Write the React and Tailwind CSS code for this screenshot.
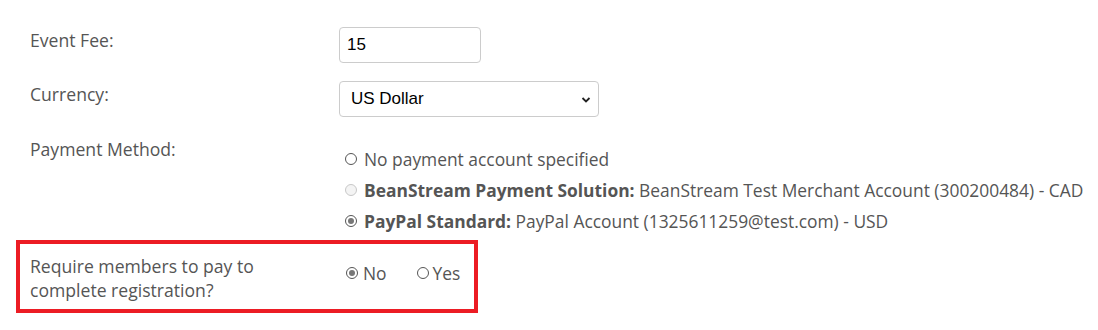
import React, { useState } from "react";

const Radio = ({ checked, disabled }) => (
    <span
        className={`inline-flex items-center justify-center w-[12px] h-[12px] rounded-full border shrink-0 ${
            disabled ? "border-[#c8c8c8] bg-[#f4f4f4]" : "border-[#555] bg-white"
        }`}
    >
        {checked && <span className="w-[6px] h-[6px] rounded-full bg-[#777]" />}
    </span>
);

const App = () => {
    const [fee, setFee] = useState("15");

    return (
        <div
            className="w-[1098px] h-[330px] bg-white text-[#555] text-[17.6px] leading-[24px] pt-[27px] pl-[16px]"
            style={{ fontFamily: '"Open Sans", sans-serif' }}
        >
            {/* Event Fee */}
            <div className="flex items-start">
                <div className="w-[323px] pl-[14px] pt-[1px]">Event Fee:</div>
                <input
                    value={fee}
                    onChange={(e) => setFee(e.target.value)}
                    className="w-[142px] h-[36px] border border-[#ccc] rounded-[4px] px-[7px] text-black text-[17px] outline-none"
                    style={{ fontFamily: '"Liberation Sans", Arial, sans-serif' }}
                />
            </div>

            {/* Currency */}
            <div className="flex items-start mt-[18px]">
                <div className="w-[323px] pl-[14px] pt-[1px]">Currency:</div>
                <div className="relative w-[260px] h-[36px] border border-[#ccc] rounded-[4px] flex items-center px-[11px] text-black text-[17px]">
                    <span style={{ fontFamily: '"Liberation Sans", Arial, sans-serif' }}>US Dollar</span>
                    <svg className="absolute right-[7px] top-[14px]" width="10" height="8" viewBox="0 0 10 8">
                        <path d="M1.5 2 L5 5.5 L8.5 2" fill="none" stroke="#222" strokeWidth="1.8" />
                    </svg>
                </div>
            </div>

            {/* Payment Method */}
            <div className="flex items-start mt-[18px]">
                <div className="w-[323px] pl-[14px] pt-[2px]">Payment Method:</div>
                <div className="flex flex-col gap-[7px] pt-[12px] pl-[6px] text-[17.4px]">
                    <div className="flex items-center gap-[7px]">
                        <Radio />
                        <span>No payment account specified</span>
                    </div>
                    <div className="flex items-center gap-[7px]">
                        <Radio disabled />
                        <span>
                            <b className="font-bold">BeanStream Payment Solution:</b> BeanStream Test Merchant Account (300200484) - CAD
                        </span>
                    </div>
                    <div className="flex items-center gap-[7px]">
                        <Radio checked />
                        <span>
                            <b className="font-bold">PayPal Standard:</b> PayPal Account (1325611259@test.com) - USD
                        </span>
                    </div>
                </div>
            </div>

            {/* Require payment */}
            <div className="flex items-start w-[462px] h-[73px] border-[4px] border-[#ec1c24] mt-[7px]">
                <div className="w-[319px] pl-[10px] pt-[10px]">
                    Require members to pay to
                    <br />
                    complete registration?
                </div>
                <div className="flex items-center pt-[17px] pl-[7px] text-[17.4px]">
                    <div className="flex items-center gap-[5px]">
                        <Radio checked />
                        <span>No</span>
                    </div>
                    <div className="flex items-center gap-[4px] ml-[30px]">
                        <Radio />
                        <span>Yes</span>
                    </div>
                </div>
            </div>
        </div>
    );
};

export default App;
